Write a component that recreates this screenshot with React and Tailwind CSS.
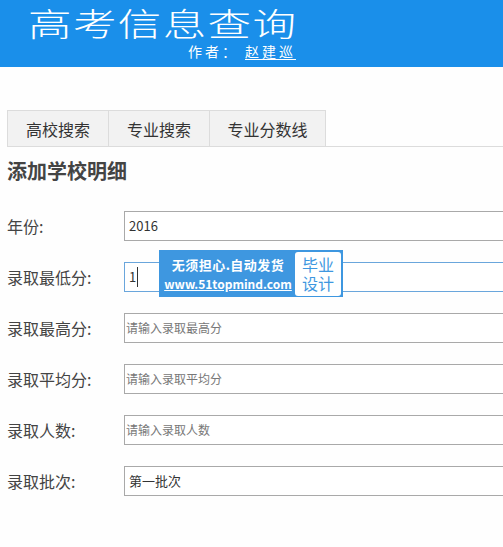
import React from "react";

const FONT = { fontFamily: '"Microsoft YaHei", "Noto Sans CJK SC", "Noto Sans", sans-serif' };

const FIELDS = [
  { label: "年份:", value: "2016" },
  { label: "录取最低分:", value: "1", focus: true },
  { label: "录取最高分:", placeholder: "请输入录取最高分" },
  { label: "录取平均分:", placeholder: "请输入录取平均分" },
  { label: "录取人数:", placeholder: "请输入录取人数" },
  { label: "录取批次:", value: "第一批次" },
];

const Header = () => (
  <div className="h-[67px] bg-[#1a8fea] pl-[28px] pt-[1px]">
    <div className="w-[268px]">
      <div className="text-[32px] leading-[42px] font-light text-white origin-left scale-x-[1.36] whitespace-nowrap tracking-[1px]">
        高考信息查询
      </div>
      <div className="text-right text-[14px] leading-[16px] text-white tracking-[3px] whitespace-nowrap">
        作者：<span className="ml-[6px] underline underline-offset-2">赵建巡</span>
      </div>
    </div>
  </div>
);

const Tabs = () => (
  <div className="mt-[43px] ml-[7px] flex border-b border-[#dcdcdc]">
    {["高校搜索", "专业搜索", "专业分数线"].map((t, i) => (
      <div
        key={t}
        className={
          "h-[36px] flex items-center justify-center bg-[#f2f2f2] border-t border-l border-[#dcdcdc] text-[16px] text-[#333] " +
          (i === 2 ? "w-[117px] border-r" : "w-[101px]")
        }
      >
        {t}
      </div>
    ))}
  </div>
);

const Badge = () => (
  <div className="absolute left-[159px] top-[250px] w-[184px] h-[47px] bg-[#3e97e0] flex items-center pl-[5px] pr-[2px]">
    <div className="flex flex-col items-center w-[128px]">
      <div className="text-[13px] leading-[20px] font-semibold text-white whitespace-nowrap tracking-[0.5px]">无须担心.自动发货</div>
      <div className="text-[12px] leading-[18px] font-semibold text-white underline whitespace-nowrap">www.51topmind.com</div>
    </div>
    <div className="ml-auto w-[46px] h-[44px] bg-white rounded-[3px] flex flex-col items-center justify-center text-[#3e97e0] text-[16px] leading-[19px]">
      <span>毕业</span>
      <span>设计</span>
    </div>
  </div>
);

export default function App() {
  return (
    <div className="relative w-[503px] h-[547px] overflow-hidden bg-[#fefefe]" style={FONT}>
      <Header />
      <Tabs />
      <div className="ml-[7px] mt-[10px] text-[20px] leading-[28px] font-bold text-[#444]">添加学校明细</div>

      <div className="mt-[26px] flex flex-col gap-[21px]">
        {FIELDS.map((f) => (
          <div key={f.label} className="flex items-center h-[30px]">
            <div className="w-[124px] shrink-0 pl-[7px] text-[16px] text-[#444] whitespace-nowrap">{f.label}</div>
            <div
              className={
                "h-[30px] w-[420px] shrink-0 border flex items-center bg-white " +
                (f.focus ? "border-[#6aa6dc]" : "border-[#a9a9a9]")
              }
            >
              {f.value ? (
                <span className={"pl-[4px] text-[13px] text-[#333]" + (f.focus ? " border-r border-[#333] pr-[1px]" : "")}>
                  {f.value}
                </span>
              ) : (
                <span className="pl-[1px] text-[12px] text-[#777]">{f.placeholder}</span>
              )}
            </div>
          </div>
        ))}
      </div>

      <Badge />
    </div>
  );
}
